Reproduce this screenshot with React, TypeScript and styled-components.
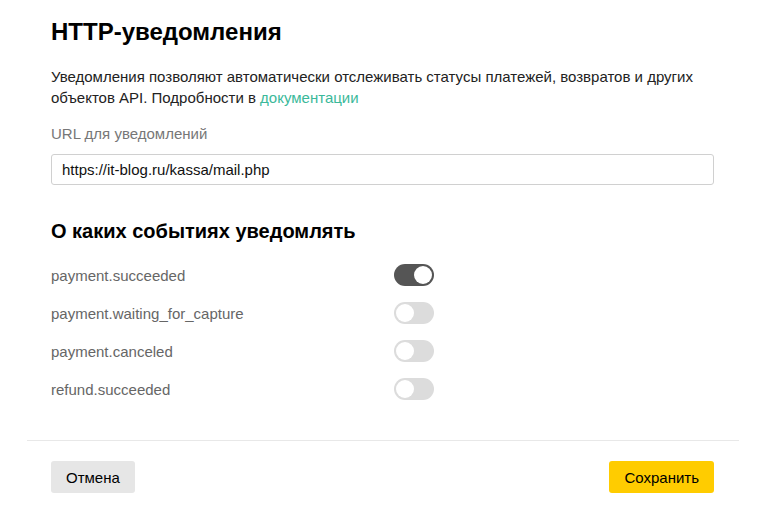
import { useState } from "react"
import styled, { createGlobalStyle } from "styled-components"

const GlobalStyle = createGlobalStyle`
  body {
    margin: 0;
    background: #fff;
    font-family: "Liberation Sans", Arial, sans-serif;
    color: #000;
  }
`

const events = [
    { id: "payment.succeeded", on: true },
    { id: "payment.waiting_for_capture", on: false },
    { id: "payment.canceled", on: false },
    { id: "refund.succeeded", on: false },
]

const App = () => {
    const [state, setState] = useState(events)

    const toggle = (id: string) =>
        setState(s => s.map(e => (e.id === id ? { ...e, on: !e.on } : e)))

    return (
        <>
            <GlobalStyle />
            <Modal>
                <Body>
                    <Title>HTTP-уведомления</Title>
                    <Description>
                        Уведомления позволяют автоматически отслеживать статусы платежей, возвратов и других
                        объектов API. Подробности в <Link href="#">документации</Link>
                    </Description>
                    <Label>URL для уведомлений</Label>
                    <Input defaultValue="https://it-blog.ru/kassa/mail.php" />
                    <Subtitle>О каких событиях уведомлять</Subtitle>
                    <EventList>
                        {state.map(e => (
                            <EventRow key={e.id}>
                                <EventName>{e.id}</EventName>
                                <Switch $on={e.on} onClick={() => toggle(e.id)} />
                            </EventRow>
                        ))}
                    </EventList>
                </Body>
                <Footer>
                    <Button>Отмена</Button>
                    <Button $primary>Сохранить</Button>
                </Footer>
            </Modal>
        </>
    )
}

const Modal = styled.div`
  padding: 0 33px 0 27px;
`

const Body = styled.div`
  padding: 18px 25px 32px 24px;
  border-bottom: 1px solid #e8e8e8;
`

const Title = styled.h1`
  margin: 0;
  font-size: 24px;
  line-height: 28px;
  font-weight: 700;
  color: #000;
`

const Description = styled.p`
  margin: 20px 0 0;
  font-size: 15px;
  line-height: 21px;
  color: #222;
`

const Link = styled.a`
  color: #3bb99a;
  text-decoration: none;
`

const Label = styled.div`
  margin-top: 16px;
  font-size: 15px;
  line-height: 20px;
  color: #777;
`

const Input = styled.input`
  display: block;
  box-sizing: border-box;
  width: 100%;
  height: 31px;
  margin-top: 10px;
  padding: 0 10px;
  border: 1px solid #d0d0d0;
  border-radius: 3px;
  font-family: "Liberation Sans", Arial, sans-serif;
  font-size: 15px;
  color: #111;
  outline: none;
`

const Subtitle = styled.h2`
  margin: 34px 0 0;
  font-size: 20px;
  line-height: 24px;
  font-weight: 700;
  color: #000;
`

const EventList = styled.div`
  margin-top: 13px;
`

const EventRow = styled.div`
  display: grid;
  grid-template-columns: 343px 40px;
  align-items: center;
  height: 38px;
`

const EventName = styled.span`
  font-size: 15px;
  color: #666;
`

const Switch = styled.button<{ $on: boolean }>`
  position: relative;
  width: 40px;
  height: 22px;
  padding: 0;
  border: none;
  border-radius: 11px;
  background: ${p => (p.$on ? "#555" : "#dcdcdc")};
  cursor: pointer;

  &::after {
    content: "";
    position: absolute;
    top: 2px;
    left: ${p => (p.$on ? "20px" : "2px")};
    width: 18px;
    height: 18px;
    border-radius: 50%;
    background: #fff;
  }
`

const Footer = styled.div`
  display: flex;
  justify-content: space-between;
  padding: 20px 25px 0 24px;
`

const Button = styled.button<{ $primary?: boolean }>`
  height: 32px;
  padding: 0 15px;
  border: none;
  border-radius: 3px;
  background: ${p => (p.$primary ? "#ffcc00" : "#e6e6e6")};
  font-family: "Liberation Sans", Arial, sans-serif;
  font-size: 15px;
  color: #000;
  cursor: pointer;
`

export default App
